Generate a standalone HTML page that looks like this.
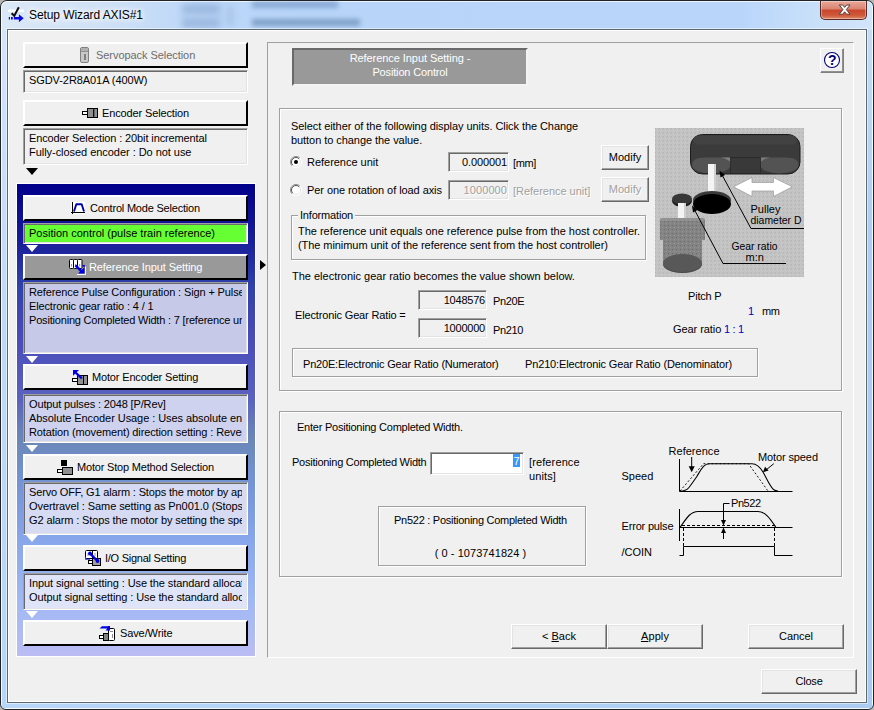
<!DOCTYPE html>
<html>
<head>
<meta charset="utf-8">
<title>Setup Wizard AXIS#1</title>
<style>
html,body{margin:0;padding:0;}
body{width:874px;height:710px;overflow:hidden;background:#b8b4b2;font-family:"Liberation Sans",sans-serif;font-size:11px;color:#000;position:relative;}
.a{position:absolute;box-sizing:border-box;white-space:nowrap;}
#win{left:0;top:0;width:874px;height:710px;border:1px solid #202428;border-radius:7px 7px 6px 6px;background:linear-gradient(90deg,#dbe8f6 0px,#cfe1f6 100px,#bcd7f8 200px,#b8d5f9 300px,#b9d6fa 740px,#c8dff9 810px,#d2e5fa 874px);overflow:hidden;}
#win:before{content:"";position:absolute;left:0;top:0;right:0;bottom:0;border:1px solid rgba(255,255,255,.75);border-radius:6px 6px 5px 5px;}
#client{left:8px;top:30px;width:858px;height:672px;background:#f0f0f0;border:1px solid #fff;}
#cb{left:7px;top:29px;width:860px;height:674px;border:1px solid #5c6872;box-shadow:0 0 0 1px rgba(255,255,255,.5);}
#title{left:29px;top:8px;font-size:12px;line-height:15px;color:#000;text-shadow:0 0 6px #fff,0 0 6px #fff,0 0 9px #fff;}
.t{line-height:14px;height:14px;}
.lbtn{left:23px;width:225px;height:26px;background:#f0f0f0;border-top:2px solid #fff;border-left:2px solid #fff;border-bottom:2px solid #000;border-right:2px solid #000;}
.sunk{border:1px solid;border-color:#a0a0a0 #fff #fff #a0a0a0;box-shadow:inset 1px 1px 0 #696969, inset -1px -1px 0 #e3e3e3;background:#f0f0f0;}
.lbox{left:23px;width:225px;overflow:hidden;}
.lbox .t{left:5px;}
.clip{left:0;top:0;width:218px;height:100%;overflow:hidden;}
.btn{background:#f0f0f0;border:1px solid;border-color:#fff #696969 #696969 #fff;box-shadow:inset -1px -1px 0 #a0a0a0, inset 1px 1px 0 #e3e3e3;text-align:center;}
.etch{border:1px solid #a0a0a0;box-shadow:1px 1px 0 #fff, inset 1px 1px 0 #fff;}
.thin{border:1px solid #a0a0a0;}
.dis{color:#a0a0a0;text-shadow:1px 1px 0 #fff;}
.tri-d{width:0;height:0;border-left:6.5px solid transparent;border-right:6.5px solid transparent;border-top:7px solid #000;}
.tri-w{width:0;height:0;border-left:6.5px solid transparent;border-right:6.5px solid transparent;border-top:7px solid #fff;}
.blue{color:#0000c0;}
u{text-decoration:underline;}
</style>
</head>
<body>
<div id="win" class="a">
<div class="a" style="left:1px;top:29px;width:5px;height:673px;background:linear-gradient(#d2e5fb 0,#c0daf8 250px,#b6d5f8 680px)"></div>
<div class="a" style="left:866px;top:29px;width:5px;height:673px;background:linear-gradient(#c4dcf8 0,#aecdf2 200px,#aacaf0 680px)"></div>
<div class="a" style="left:1px;top:702px;width:870px;height:5px;background:linear-gradient(90deg,#b8d6f8,#b2d2f6 50%,#accbf1)"></div>
<!-- blurred glass content -->
<div class="a" style="left:181px;top:3px;width:38px;height:10px;background:#7c9cc8;filter:blur(3px);opacity:.5"></div>
<div class="a" style="left:181px;top:17px;width:38px;height:10px;background:#7c9cc8;filter:blur(3px);opacity:.5"></div>
<div class="a" style="left:225px;top:5px;width:8px;height:20px;background:#9ab8dc;filter:blur(3px);opacity:.5"></div>
<div class="a" style="left:251px;top:0px;width:86px;height:7px;background:#5c80b2;filter:blur(2.5px);opacity:.5"></div>
<div class="a" style="left:251px;top:18px;width:108px;height:7px;background:#50749f;filter:blur(2.5px);opacity:.55"></div>
</div>
<div id="cb" class="a"></div>
<div id="client" class="a"></div>

<!-- title -->
<svg class="a" style="left:7px;top:5px" width="19" height="19" viewBox="7 5 19 19">
<rect x="8" y="9.5" width="16" height="2.5" fill="#fff" opacity=".95"/>
<path d="M11.6 13.2 L14.3 15.8 L18.8 7.3" fill="none" stroke="#111" stroke-width="2"/>
<path d="M8.8 17h1.2v2.600h-1.200zM11 17h1.800v2.600h-1.800zM13.900 17h5v-2.700l4.800 4-4.800 4v-2.700h-5z" fill="#0a0ae0"/>
</svg>
<div id="title" class="a" style="letter-spacing:-0.078px">Setup Wizard AXIS#1</div>
<!-- close button -->
<div class="a" style="left:820px;top:1px;width:47px;height:19px;border:1px solid #5a2a28;border-top:none;border-radius:0 0 5px 5px;background:linear-gradient(#e9a99b 0%,#d9836f 45%,#c8452a 50%,#cf5a3c 80%,#e08a6a 100%);box-shadow:inset 0 0 0 1px rgba(255,255,255,.35);"></div>
<svg class="a" style="left:837px;top:3px" width="16" height="14" viewBox="837 3 16 14"><path d="M839.300 5 H842.700 L844.650 7.400 L846.600 5 H850 L846.350 9.600 L850 14.200 H846.600 L844.650 11.800 L842.700 14.200 H839.300 L842.950 9.600 Z" fill="#fff" stroke="#4a3030" stroke-width="0.900" stroke-linejoin="round"/></svg>

<!-- LEFT PANEL -->
<div class="a lbtn" style="top:42px"></div>
<svg class="a" style="left:80px;top:47px" width="9" height="16" viewBox="0 0 9 16"><rect x=".5" y=".5" width="8" height="15" rx="1.5" fill="#c8c8c8" stroke="#808080"/><rect x="1" y="1" width="7" height="3" fill="#b0b0b0"/><rect x="1" y="4" width="7" height="1" fill="#909090"/><rect x="4" y="7" width="2" height="6" fill="#808080"/></svg>
<div class="a t" style="left:96px;top:48px;color:#6d6d6d;letter-spacing:-0.055px">Servopack Selection</div>
<div class="a sunk lbox" style="top:70px;height:23px"><div class="a t" style="top:2px;letter-spacing:-0.075px">SGDV-2R8A01A (400W)</div></div>

<div class="a lbtn" style="top:100px"></div>
<svg class="a" style="left:82px;top:107px" width="17" height="12" viewBox="82 107 17 12"><rect x="87.500" y="108.500" width="10" height="9" fill="#909090" stroke="#000"/><path d="M93.700 108.500 V117.500" stroke="#000" stroke-width="1.200"/><rect x="82.500" y="111.500" width="5" height="3" fill="#fff" stroke="#000"/></svg>
<div class="a t" style="left:102px;top:106px;letter-spacing:-0.130px">Encoder Selection</div>
<div class="a sunk lbox" style="top:128px;height:37px"><div class="a t" style="top:2px;letter-spacing:-0.117px">Encoder Selection : 20bit incremental</div><div class="a t" style="top:16px;letter-spacing:-0.043px">Fully-closed encoder : Do not use</div></div>
<div class="a tri-d" style="left:26px;top:168px"></div>

<!-- blue gradient panel -->
<div class="a" style="left:16px;top:183px;width:240px;height:474px;border:1px solid #fff;background:linear-gradient(#00008c 0%,#06068e 3%,#181e9a 12%,#3042ac 22%,#3e46b0 27%,#4a4cba 33%,#5a62c0 45.8%,#6880ba 52%,#6c88ba 55%,#7090d0 60.6%,#7a98de 67%,#8aa8ec 76.7%,#a0b8f4 88%,#b2bcf4 96.6%,#bcbcf4 100%);"></div>

<div class="a lbtn" style="top:195px"></div>
<svg class="a" style="left:70px;top:200px" width="17" height="16" viewBox="70 200 17 16"><rect x="71" y="202" width="14" height="12" fill="#fff"/><path d="M72.500 202 V214 M71 212.500 H85" stroke="#000" stroke-width="1" fill="none"/><path d="M74 211.500 L76.300 204.200 H81.700 L84 211.500" fill="none" stroke="#0000a8" stroke-width="1.900" stroke-linejoin="round"/></svg>
<div class="a t" style="left:90px;top:201px;letter-spacing:-0.202px">Control Mode Selection</div>
<div class="a lbox" style="top:223px;height:21px;background:#66ff33;border:1px solid;border-color:#a0a0a0 #fff #fff #a0a0a0;box-shadow:inset 1px 1px 0 #696969, inset -1px -1px 0 #e3e3e3;"><div class="a t" style="top:2px;letter-spacing:0.003px">Position control (pulse train reference)</div></div>
<div class="a tri-w" style="left:26px;top:245px"></div>

<div class="a lbtn" style="top:254px;background:#999"></div>
<svg class="a" style="left:68px;top:257px" width="19" height="19" viewBox="68 257 19 19"><rect x="69.500" y="259.500" width="4" height="9" rx="1" fill="#fff" stroke="#000"/><rect x="73.500" y="259.500" width="4" height="9" rx="1" fill="#fff" stroke="#000"/><rect x="77.500" y="259.500" width="4.500" height="9" rx="1" fill="#fff" stroke="#000"/><path d="M71.500 264v2.500M75.500 264v2.500M79.700 264v2.500" stroke="#999" stroke-width="1"/><path d="M77 274.500 H85.500 V266.500" fill="none" stroke="#fff" stroke-width="1"/><path d="M75.500 265.300 L82 271.800" stroke="#0000e6" stroke-width="2.400"/><path d="M84.600 267 V273.600 H78Z" fill="#0000e6"/><rect x="82.500" y="265" width="2.500" height="1.700" fill="#0000e6"/></svg>
<div class="a t" style="left:89px;top:260px;color:#fff;letter-spacing:-0.099px">Reference Input Setting</div>
<div class="a sunk lbox" style="top:282px;height:72px;background:#c6cae8;"><div class="a clip"><div class="a t" style="top:2px;letter-spacing:-0.126px">Reference Pulse Configuration : Sign + Pulse</div><div class="a t" style="top:16px;letter-spacing:-0.132px">Electronic gear ratio : 4 / 1</div><div class="a t" style="top:30px;letter-spacing:-0.188px">Positioning Completed Width : 7 [reference units]</div></div></div>
<div class="a tri-w" style="left:26px;top:356px"></div>

<div class="a lbtn" style="top:364px"></div>
<svg class="a" style="left:71px;top:369px" width="18" height="17" viewBox="71 369 18 17"><rect x="77.500" y="375.500" width="10" height="9" fill="#909090" stroke="#000"/><path d="M83.500 375.500 V384.500" stroke="#000"/><rect x="72.500" y="378.500" width="5" height="3" fill="#fff" stroke="#000"/><path d="M73 370 H79 L73 375.800Z" fill="#0000e6"/><path d="M75 372 L81.800 378.300" stroke="#0000e6" stroke-width="2.300"/></svg>
<div class="a t" style="left:92px;top:370px;letter-spacing:-0.158px">Motor Encoder Setting</div>
<div class="a sunk lbox" style="top:394px;height:49px;background:#ced2ee;"><div class="a clip"><div class="a t" style="top:2px;letter-spacing:-0.142px">Output pulses : 2048 [P/Rev]</div><div class="a t" style="top:16px;letter-spacing:-0.067px">Absolute Encoder Usage : Uses absolute encoder</div><div class="a t" style="top:30px;letter-spacing:-0.120px">Rotation (movement) direction setting : Reverse</div></div></div>
<div class="a tri-w" style="left:26px;top:445px"></div>

<div class="a lbtn" style="top:454px"></div>
<svg class="a" style="left:56px;top:459px" width="18" height="17" viewBox="56 459 18 17"><rect x="61" y="460" width="6" height="6" fill="#000"/><rect x="57.500" y="469.500" width="5" height="3" fill="#fff" stroke="#000"/><rect x="62.500" y="467.500" width="10" height="7" fill="#909090" stroke="#000"/></svg>
<div class="a t" style="left:77px;top:460px;letter-spacing:-0.187px">Motor Stop Method Selection</div>
<div class="a sunk lbox" style="top:482px;height:53px;background:#d6daf2;"><div class="a clip"><div class="a t" style="top:2px;letter-spacing:-0.155px">Servo OFF, G1 alarm : Stops the motor by applying</div><div class="a t" style="top:16px;letter-spacing:-0.086px">Overtravel : Same setting as Pn001.0 (Stops the</div><div class="a t" style="top:30px;letter-spacing:-0.117px">G2 alarm : Stops the motor by setting the speed</div></div></div>
<div class="a tri-w" style="left:26px;top:535px"></div>

<div class="a lbtn" style="top:545px"></div>
<svg class="a" style="left:84px;top:549px" width="18" height="18" viewBox="84 549 18 18"><rect x="85.500" y="550.500" width="12" height="8" rx="1" fill="#fff" stroke="#000"/><path d="M92.500 551 V558" stroke="#000"/><path d="M88 553v3M95 553v3" stroke="#999"/><rect x="92.500" y="558.500" width="8" height="7" fill="#a0a0a0" stroke="#000"/><rect x="88.500" y="560.500" width="4" height="3" fill="#fff" stroke="#000"/><path d="M85 559 H90" stroke="#0000c0" stroke-width="1.200"/><path d="M90 553.500 L97.500 561" stroke="#0000e0" stroke-width="2.400" stroke-linecap="round"/><circle cx="90" cy="553.500" r="1.900" fill="#0000e0"/><circle cx="97.500" cy="561" r="1.900" fill="#0000e0"/></svg>
<div class="a t" style="left:105px;top:551px;letter-spacing:-0.253px">I/O Signal Setting</div>
<div class="a sunk lbox" style="top:573px;height:37px;background:#dfe4f8;"><div class="a clip"><div class="a t" style="top:2px;letter-spacing:-0.098px">Input signal setting : Use the standard allocation</div><div class="a t" style="top:16px;letter-spacing:-0.095px">Output signal setting : Use the standard allocation</div></div></div>
<div class="a tri-w" style="left:26px;top:611px"></div>

<div class="a lbtn" style="top:620px"></div>
<svg class="a" style="left:98px;top:625px" width="18" height="17" viewBox="98 625 18 17"><rect x="108.500" y="628.500" width="6" height="12" rx="1" fill="#fff" stroke="#000"/><path d="M110 631.500h3M112.500 634v4" stroke="#888"/><rect x="103.500" y="633.500" width="5" height="7" fill="#808080" stroke="#000"/><rect x="99.500" y="635.500" width="4" height="3" fill="#fff" stroke="#000"/><path d="M99.500 628.600 L102 626.300 H108 V626 H110 V630.500 H105.500 L107.300 628.600 Z" fill="#0000e0"/></svg>
<div class="a t" style="left:120px;top:626px;letter-spacing:-0.110px">Save/Write</div>

<!-- pointer -->
<div class="a" style="left:260px;top:260px;width:0;height:0;border-top:5px solid transparent;border-bottom:5px solid transparent;border-left:6px solid #000"></div>

<!-- RIGHT PANEL -->
<div class="a" style="left:267px;top:42px;width:587px;height:616px;border:1px solid;border-color:#a0a0a0 #fff #fff #a0a0a0"></div>
<div class="a" style="left:292px;top:48px;width:236px;height:38px;background:#999;border:2px solid;border-color:#696969 #f4f4f4 #f4f4f4 #696969;"></div>
<div class="a t" style="left:292px;width:236px;top:51px;text-align:center;color:#fff;letter-spacing:-0.062px">Reference Input Setting -</div>
<div class="a t" style="left:292px;width:236px;top:65px;text-align:center;color:#fff;letter-spacing:-0.157px">Position Control</div>
<div class="a btn" style="left:820px;top:48px;width:24px;height:25px;border-color:#fff #808080 #808080 #fff;box-shadow:inset -1px -1px 0 #909090"></div>
<svg class="a" style="left:823px;top:51px" width="18" height="18" viewBox="0 0 18 18"><circle cx="9" cy="9" r="7.500" fill="#fff" stroke="#000078" stroke-width="1.100"/><text x="9.300" y="14.400" text-anchor="middle" font-family="Liberation Sans,sans-serif" font-weight="bold" font-size="14" fill="#000078">?</text></svg>

<!-- group 1 -->
<div class="a etch" style="left:279px;top:108px;width:563px;height:283px"></div>
<div class="a t" style="left:291px;top:119px;letter-spacing:-0.063px">Select either of the following display units. Click the Change</div>
<div class="a t" style="left:291px;top:133px;letter-spacing:-0.058px">button to change the value.</div>
<svg class="a" style="left:290px;top:156px" width="12" height="12" viewBox="0 0 12 12"><circle cx="6" cy="6" r="5.500" fill="#fff"/><path d="M2.100 9.900 A5.500 5.500 0 0 1 9.900 2.100" fill="none" stroke="#8c8c8c" stroke-width="1"/><path d="M2.800 9.200 A4.500 4.500 0 0 1 9.200 2.800" fill="none" stroke="#505050" stroke-width="1"/><path d="M2.100 9.900 A5.500 5.500 0 0 0 9.900 2.100" fill="none" stroke="#fff" stroke-width="1"/><path d="M2.800 9.200 A4.500 4.500 0 0 0 9.200 2.800" fill="none" stroke="#e3e3e3" stroke-width="1"/><circle cx="6" cy="6" r="2" fill="#000"/></svg>
<div class="a t" style="left:307px;top:155px;letter-spacing:-0.027px">Reference unit</div>
<svg class="a" style="left:290px;top:184px" width="12" height="12" viewBox="0 0 12 12"><circle cx="6" cy="6" r="5.500" fill="#fff"/><path d="M2.100 9.900 A5.500 5.500 0 0 1 9.900 2.100" fill="none" stroke="#8c8c8c" stroke-width="1"/><path d="M2.800 9.200 A4.500 4.500 0 0 1 9.200 2.800" fill="none" stroke="#505050" stroke-width="1"/><path d="M2.100 9.900 A5.500 5.500 0 0 0 9.900 2.100" fill="none" stroke="#fff" stroke-width="1"/><path d="M2.800 9.200 A4.500 4.500 0 0 0 9.200 2.800" fill="none" stroke="#e3e3e3" stroke-width="1"/></svg>
<div class="a t" style="left:307px;top:183px;letter-spacing:-0.071px">Per one rotation of load axis</div>
<div class="a sunk" style="left:448px;top:152px;width:61px;height:20px;"><div class="a t" style="right:1px;top:2px;letter-spacing:-0.113px">0.000001</div></div>
<div class="a t" style="left:513px;top:156px;letter-spacing:-0.350px">[mm]</div>
<div class="a sunk" style="left:448px;top:180px;width:61px;height:20px;"><div class="a t dis" style="right:1px;top:2px;letter-spacing:0.079px">1000000</div></div>
<div class="a t dis" style="left:513px;top:184px;letter-spacing:-0.024px">[Reference unit]</div>
<div class="a btn" style="left:601px;top:145px;width:48px;height:25px;line-height:22px"><span style="letter-spacing:0.019px">Modify</span></div>
<div class="a btn dis" style="left:601px;top:177px;width:48px;height:25px;line-height:22px"><span style="letter-spacing:0.019px">Modify</span></div>

<div class="a etch" style="left:291px;top:215px;width:355px;height:45px"></div>
<div class="a t" style="left:298px;top:208px;background:#f0f0f0;padding:0 2px;letter-spacing:-0.183px">Information</div>
<div class="a t" style="left:298px;top:224px;letter-spacing:-0.013px">The reference unit equals one reference pulse from the host controller.</div>
<div class="a t" style="left:298px;top:238px;letter-spacing:-0.068px">(The minimum unit of the reference sent from the host controller)</div>

<div class="a t" style="left:292px;top:269px;letter-spacing:-0.004px">The electronic gear ratio becomes the value shown below.</div>
<div class="a t" style="left:295px;top:308px;letter-spacing:-0.147px">Electronic Gear Ratio =</div>
<div class="a sunk" style="left:418px;top:290px;width:69px;height:20px;"><div class="a t" style="right:1px;top:2px;letter-spacing:-0.221px">1048576</div></div>
<div class="a t" style="left:493px;top:294px;letter-spacing:-0.350px">Pn20E</div>
<div class="a sunk" style="left:418px;top:318px;width:69px;height:20px;"><div class="a t" style="right:1px;top:2px;letter-spacing:-0.221px">1000000</div></div>
<div class="a t" style="left:493px;top:323px;letter-spacing:-0.350px">Pn210</div>
<div class="a etch" style="left:292px;top:348px;width:466px;height:29px"></div>
<div class="a t" style="left:303px;top:357px;letter-spacing:-0.189px">Pn20E:Electronic Gear Ratio (Numerator)</div>
<div class="a t" style="left:525px;top:357px;letter-spacing:-0.142px">Pn210:Electronic Gear Ratio (Denominator)</div>

<div class="a t" style="left:688px;top:289px;letter-spacing:-0.193px">Pitch P</div>
<div class="a t blue" style="left:748px;top:304px">1</div>
<div class="a t" style="left:762px;top:304px;letter-spacing:-0.350px">mm</div>
<div class="a t" style="left:673px;top:322px;letter-spacing:-0.069px">Gear ratio</div>
<div class="a t blue" style="left:724px;top:322px;letter-spacing:-0.302px">1 : 1</div>

<!-- machine image -->
<svg class="a" id="mach" style="left:655px;top:128px" width="149" height="149" viewBox="0 0 149 149">
<defs><pattern id="nz" width="4" height="4" patternUnits="userSpaceOnUse"><rect width="4" height="4" fill="#c3c3c3"/><rect x="0" y="0" width="1" height="1" fill="#b4b4b4"/><rect x="2" y="2" width="1" height="1" fill="#cdcdcd"/><rect x="3" y="1" width="1" height="1" fill="#b8b8b8"/></pattern>
<pattern id="nz2" width="4" height="4" patternUnits="userSpaceOnUse"><rect width="4" height="4" fill="#848484"/><rect x="1" y="1" width="1" height="1" fill="#6a6a6a"/><rect x="3" y="3" width="1" height="1" fill="#949494"/></pattern></defs>
<rect width="149" height="149" fill="url(#nz)"/>
<!-- belt -->
<rect x="35.500" y="6.500" width="109.500" height="39.500" rx="12" ry="12" fill="#3b3b3b" stroke="#1c1c1c" stroke-width="1"/>
<rect x="38" y="7.500" width="104" height="9" rx="6" fill="#424242"/>
<path d="M37 37 Q37 29.500 50 29.500 H75.500 V37 A19.250 8.500 0 0 1 37 37Z" fill="#535353"/>
<path d="M66 29.500 H75.500 V34 Q72 30.500 66 29.500Z" fill="#808080"/>
<path d="M143.500 37 Q143.500 29.500 131 29.500 H105.500 V37 A19 8.500 0 0 0 143.500 37Z" fill="#535353"/>
<path d="M115 29.500 H105.500 V34 Q109 30.500 115 29.500Z" fill="#7a7a7a"/>
<rect x="75.500" y="29.500" width="30" height="16" fill="#393939" stroke="#222" stroke-width=".6"/>
<!-- shaft -->
<rect x="53" y="36" width="8" height="32" fill="#f4f4f4"/>
<rect x="59" y="36" width="2" height="32" fill="#d0d0d0"/>
<!-- big gear -->
<ellipse cx="57" cy="72" rx="19" ry="9" fill="#3a3a3a"/>
<ellipse cx="57" cy="76" rx="19" ry="10" fill="#000"/>
<!-- small gear -->
<ellipse cx="27" cy="73" rx="10" ry="6" fill="#1c1c1c"/>
<ellipse cx="27" cy="71" rx="10" ry="5.500" fill="#383838"/>
<!-- small shaft -->
<rect x="23" y="75" width="8" height="17" fill="#f4f4f4"/>
<rect x="29" y="75" width="2" height="17" fill="#d0d0d0"/>
<!-- motor -->
<path d="M5 92 Q5 90 8 90 H47 Q50 90 50 92 V112 H47 V136 A19.500 9 0 0 1 8 136 V112 H5 Z" fill="url(#nz2)"/>
<path d="M8 134 A19.500 9 0 0 0 47 134 V136 A19.500 9 0 0 1 8 136Z" fill="#4a4a4a"/>
<ellipse cx="27.500" cy="135" rx="19.500" ry="9" fill="#585858"/>
<rect x="5" y="90" width="45" height="3" fill="#9a9a9a" opacity=".6"/>
<!-- double arrow -->
<path d="M78.500 58.800 L97 49.500 V54.500 H118.500 V49.500 L137.300 58.800 L118.500 68.500 V63 H97 V68.500 Z" fill="#fff" stroke="#9a9a9a" stroke-width=".7"/>
<!-- leader lines -->
<path d="M66 45 L96 100.500 H149" fill="none" stroke="#000" stroke-width="1"/>
<path d="M64.500 42.500 L70 47 L65.500 49.500Z" fill="#000"/>
<path d="M38.500 80 L68 135.500 H131" fill="none" stroke="#000" stroke-width="1"/>
<path d="M37 77.500 L42.500 82 L38 84.500Z" fill="#000"/>
<text x="95.500" y="85" font-family="Liberation Sans,sans-serif" font-size="11">Pulley</text>
<text x="95.500" y="95.500" font-family="Liberation Sans,sans-serif" font-size="11" textLength="51" lengthAdjust="spacingAndGlyphs">diameter D</text>
<text x="76.500" y="121.500" font-family="Liberation Sans,sans-serif" font-size="11" textLength="46" lengthAdjust="spacingAndGlyphs">Gear ratio</text>
<text x="90.500" y="133" font-family="Liberation Sans,sans-serif" font-size="11">m:n</text>
</svg>

<!-- group 2 -->
<div class="a etch" style="left:279px;top:411px;width:563px;height:166px"></div>
<div class="a t" style="left:297px;top:420px;letter-spacing:-0.232px">Enter Positioning Completed Width.</div>
<div class="a t" style="left:292px;top:455px;letter-spacing:-0.252px">Positioning Completed Width</div>
<div class="a" style="left:430px;top:452px;width:94px;height:23px;background:#fff;border:1px solid;border-color:#a0a0a0 #fff #fff #a0a0a0;box-shadow:inset 1px 1px 0 #696969, inset -1px -1px 0 #e3e3e3"><div class="a" style="right:3px;top:1px;width:7px;height:13px;background:#3399ff;color:#fff;text-align:center;line-height:14px">7</div></div>
<div class="a t" style="left:529px;top:455px;letter-spacing:0.120px">[reference</div>
<div class="a t" style="left:529px;top:469px;letter-spacing:0.120px">units]</div>
<div class="a etch" style="left:378px;top:506px;width:208px;height:60px"></div>
<div class="a t" style="left:377px;top:513px;width:207px;text-align:center;letter-spacing:-0.265px">Pn522 : Positioning Completed Width</div>
<div class="a t" style="left:377px;top:546px;width:207px;text-align:center;letter-spacing:0.052px">( 0 - 1073741824 )</div>

<!-- timing diagram -->
<svg class="a" id="diag" style="left:610px;top:430px" width="230" height="145" viewBox="610 430 230 145" font-family="Liberation Sans,sans-serif" font-size="11">
<text x="668.500" y="454.500" textLength="51" lengthAdjust="spacing">Reference</text>
<text x="758" y="461" textLength="60" lengthAdjust="spacing">Motor speed</text>
<text x="621.500" y="480">Speed</text>
<text x="621.500" y="529.500" textLength="52" lengthAdjust="spacing">Error pulse</text>
<text x="621.500" y="555.500">/COIN</text>
<text x="731" y="506.500" textLength="30" lengthAdjust="spacing">Pn522</text>
<g fill="none" stroke="#000" stroke-width="1">
<path d="M679.500 459 V491.500 H792.500"/>
<path d="M680 491 L703.500 463.700 H748.500 L768 491" stroke-dasharray="2 2" stroke-width=".9"/>
<path d="M680 491 C684 491 686.500 490.300 688.500 488 C691 485 694 480.500 696.500 477 C698.500 474 700.500 469.500 703.500 466.300 C705.500 464.300 707 463.700 709.500 463.700 H752 C757 463.700 760 467 763 472 C767 479 770 486.500 773.500 489.500 C775 490.700 776.500 491 778 491" stroke-width="1.100"/>
<path d="M691.700 457 V467"/>
<path d="M773.800 463.700 L766 470"/>
<path d="M679.500 509 V541"/>
<path d="M679.500 527.500 H792.500"/>
<path d="M680 527.500 C686 519 690 511.500 698 511.500 H758 C766 511.500 771 520 776 527.500" stroke-width="1.100"/>
<path d="M682 525.500 H776" stroke-dasharray="3 2"/>
<path d="M683.500 528 V547 M774.500 528 V547" stroke-dasharray="3 2"/>
<path d="M729.500 503.500 H723.500 V521"/>
<path d="M723.500 539 V532"/>
<path d="M679.500 555.500 H683.500 V546.500 H774.500 V555.500 H792.500"/>
</g>
<path d="M688.700 466.300 H694.700 L691.700 472.200Z" fill="#000"/>
<path d="M763 472.200 L765 466.800 L768.600 470.600Z" fill="#000"/>
<path d="M721 520 H726 L723.500 525.500Z" fill="#000"/>
<path d="M721 533 H726 L723.500 527.500Z" fill="#000"/>
</svg>

<!-- bottom buttons -->
<div class="a btn" style="left:511px;top:624px;width:96px;height:25px;line-height:22px"><span style="letter-spacing:0.009px">&lt; <u>B</u>ack</span></div>
<div class="a btn" style="left:607px;top:624px;width:96px;height:25px;line-height:22px"><span style="letter-spacing:0.120px"><u>A</u>pply</span></div>
<div class="a btn" style="left:748px;top:624px;width:96px;height:25px;line-height:22px"><span style="letter-spacing:-0.050px">Cancel</span></div>
<div class="a btn" style="left:761px;top:669px;width:96px;height:25px;line-height:22px"><span style="letter-spacing:-0.206px">Close</span></div>
</body>
</html>
